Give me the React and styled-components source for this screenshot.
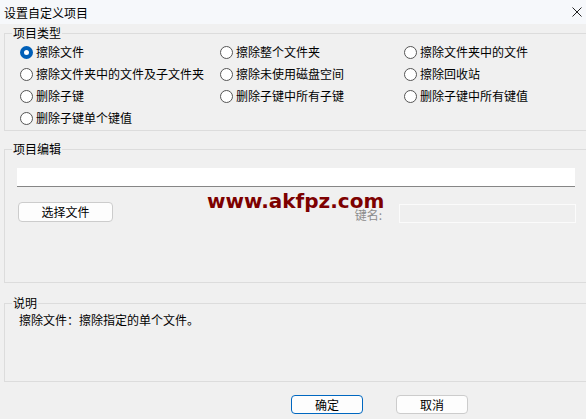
import styled, { createGlobalStyle } from 'styled-components'

const GlobalStyle = createGlobalStyle`
    html, body {
        margin: 0;
        padding: 0;
        background: #f0f0f0;
    }
    body {
        font-family: "Noto Sans CJK SC", "Liberation Sans", sans-serif;
        font-size: 12px;
        color: #000;
    }
`

const Window = styled.div`
    position: relative;
    width: 586px;
    height: 419px;
    overflow: hidden;
    background: #f0f0f0;
`

const TitleBar = styled.div`
    height: 24px;
    display: flex;
    align-items: center;
    justify-content: space-between;
    padding: 0 4px;
    background: #f6f8fb;
    font-size: 12px;
`

const CloseGlyph = styled.svg`
    width: 10px;
    height: 10px;
    margin-right: 0;
`

const Group = styled.fieldset`
    margin: ${({ $top }) => $top}px 0 0 4px;
    padding: ${({ $pad }) => $pad};
    border: 1px solid #dcdcdc;
    border-right: none;
    min-width: 0;
    height: ${({ $h }) => $h}px;
    box-sizing: border-box;
`

const Legend = styled.legend`
    padding: 0 1px;
    margin-left: ${({ $ml }) => $ml}px;
    font-size: 12px;
    line-height: 14px;
`

const RadioGrid = styled.div`
    display: grid;
    grid-template-columns: 200px 184px 1fr;
    grid-auto-rows: 22px;
    align-items: center;
`

const RadioItem = styled.label`
    display: flex;
    align-items: center;
    gap: 3px;
    white-space: nowrap;
    line-height: 14px;
`

const RadioDot = styled.span`
    width: 13px;
    height: 13px;
    box-sizing: border-box;
    border-radius: 50%;
    flex: none;
    border: ${({ $on }) => ($on ? '4px solid #005fb8' : '1px solid #555')};
    background: #fff;
`

const PathInput = styled.div`
    width: 558px;
    height: 19px;
    box-sizing: border-box;
    background: #fff;
    border-bottom: 1px solid #868686;
`

const EditRow = styled.div`
    display: flex;
    align-items: center;
    margin-top: 14px;
`

const PushButton = styled.button`
    width: ${({ $w }) => $w}px;
    height: ${({ $h }) => $h || 20}px;
    box-sizing: border-box;
    margin: 0 0 0 ${({ $ml }) => $ml || 0}px;
    padding: 0;
    border: 1px solid ${({ $primary }) => ($primary ? '#0067c0' : '#cccccc')};
    border-radius: 4px;
    background: #fdfdfd;
    font-family: inherit;
    font-size: 12px;
    line-height: 14px;
    color: #000;
`

const KeyLabel = styled.span`
    margin-left: auto;
    color: #8c8c8c;
    line-height: 14px;
    margin-top: 6px;
`

const KeyInput = styled.div`
    width: 177px;
    height: 19px;
    box-sizing: border-box;
    margin: 3px 10px 0 17px;
    border: 1px solid #fbfbfb;
    background: #efefef;
`

const Note = styled.div`
    padding-left: 3px;
    line-height: 14px;
`

const Footer = styled.div`
    display: flex;
    margin: 13px 0 0 291px;
    gap: 33px;
`

const Watermark = styled.div`
    position: absolute;
    left: 207px;
    top: 189px;
    font-family: "DejaVu Sans", sans-serif;
    font-weight: 700;
    font-size: 20px;
    color: #7d0000;
`

const radios = [
    '擦除文件', '擦除整个文件夹', '擦除文件夹中的文件',
    '擦除文件夹中的文件及子文件夹', '擦除未使用磁盘空间', '擦除回收站',
    '删除子键', '删除子键中所有子键', '删除子键中所有键值',
    '删除子键单个键值',
]

function App() {
    return (
        <Window>
            <GlobalStyle />
            <TitleBar>
                <span>设置自定义项目</span>
                <CloseGlyph viewBox="0 0 10 10">
                    <path d="M0.5 0.5 L9.5 9.5 M9.5 0.5 L0.5 9.5" stroke="#222" strokeWidth="1" fill="none" />
                </CloseGlyph>
            </TitleBar>

            <Group $top={2} $h={105} $pad="1px 0 0 15px">
                <Legend $ml={-8}>项目类型</Legend>
                <RadioGrid>
                    {radios.map((r, i) => (
                        <RadioItem key={r}>
                            <RadioDot $on={i === 0} />
                            {r}
                        </RadioItem>
                    ))}
                </RadioGrid>
            </Group>

            <Group $top={11} $h={141} $pad="12px 0 0 12px">
                <Legend $ml={-5}>项目编辑</Legend>
                <PathInput />
                <EditRow>
                    <PushButton $w={95} $ml={1}>选择文件</PushButton>
                    <KeyLabel>键名:</KeyLabel>
                    <KeyInput />
                </EditRow>
            </Group>

            <Group $top={13} $h={86} $pad="3px 0 0 11px">
                <Legend $ml={-4}>说明</Legend>
                <Note>擦除文件：擦除指定的单个文件。</Note>
            </Group>

            <Footer>
                <PushButton $w={72} $h={19} $primary>确定</PushButton>
                <PushButton $w={72} $h={19}>取消</PushButton>
            </Footer>

            <Watermark>www.akfpz.com</Watermark>
        </Window>
    )
}

export default App
